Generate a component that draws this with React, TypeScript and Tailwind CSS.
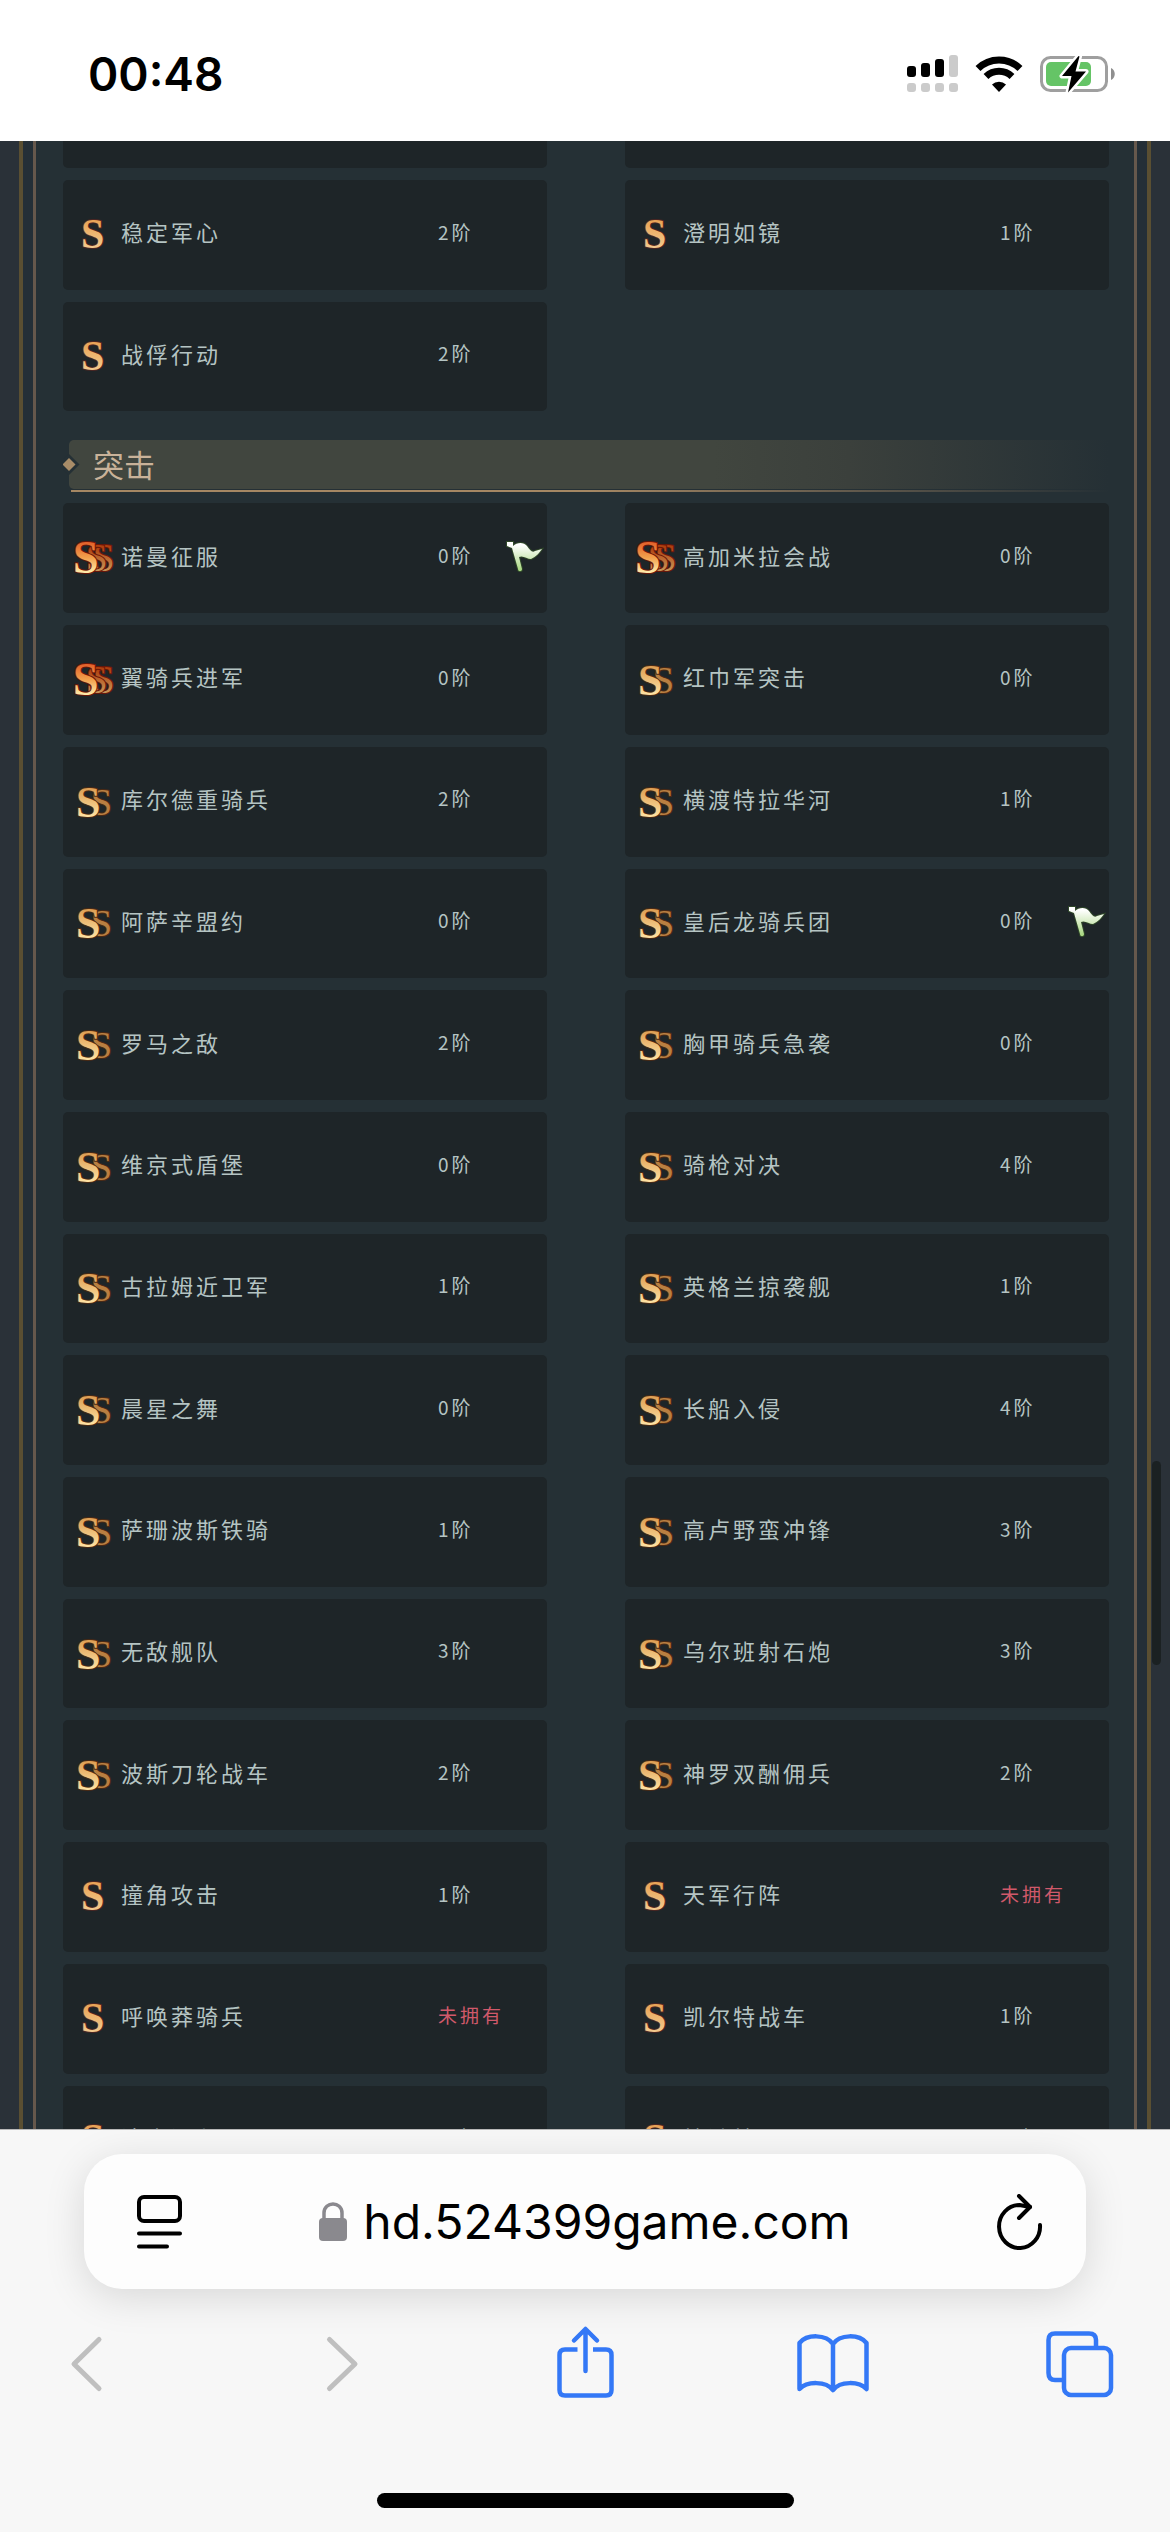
type Grade = "S" | "SS" | "SSS";

interface ITactic {
    name: string;
    grade: Grade;
    // null means the tactic is not owned
    tier: number | null;
    flagged?: boolean;
}

const previousTactics: ITactic[] = [
    { name: "稳定军心", grade: "S", tier: 2 },
    { name: "澄明如镜", grade: "S", tier: 1 },
    { name: "战俘行动", grade: "S", tier: 2 },
];

const assaultTactics: ITactic[] = [
    { name: "诺曼征服", grade: "SSS", tier: 0, flagged: true },
    { name: "高加米拉会战", grade: "SSS", tier: 0 },
    { name: "翼骑兵进军", grade: "SSS", tier: 0 },
    { name: "红巾军突击", grade: "SS", tier: 0 },
    { name: "库尔德重骑兵", grade: "SS", tier: 2 },
    { name: "横渡特拉华河", grade: "SS", tier: 1 },
    { name: "阿萨辛盟约", grade: "SS", tier: 0 },
    { name: "皇后龙骑兵团", grade: "SS", tier: 0, flagged: true },
    { name: "罗马之敌", grade: "SS", tier: 2 },
    { name: "胸甲骑兵急袭", grade: "SS", tier: 0 },
    { name: "维京式盾堡", grade: "SS", tier: 0 },
    { name: "骑枪对决", grade: "SS", tier: 4 },
    { name: "古拉姆近卫军", grade: "SS", tier: 1 },
    { name: "英格兰掠袭舰", grade: "SS", tier: 1 },
    { name: "晨星之舞", grade: "SS", tier: 0 },
    { name: "长船入侵", grade: "SS", tier: 4 },
    { name: "萨珊波斯铁骑", grade: "SS", tier: 1 },
    { name: "高卢野蛮冲锋", grade: "SS", tier: 3 },
    { name: "无敌舰队", grade: "SS", tier: 3 },
    { name: "乌尔班射石炮", grade: "SS", tier: 3 },
    { name: "波斯刀轮战车", grade: "SS", tier: 2 },
    { name: "神罗双酬佣兵", grade: "SS", tier: 2 },
    { name: "撞角攻击", grade: "S", tier: 1 },
    { name: "天军行阵", grade: "S", tier: null },
    { name: "呼唤莽骑兵", grade: "S", tier: null },
    { name: "凯尔特战车", grade: "S", tier: 1 },
    { name: "清支河北", grade: "S", tier: 1 },
    { name: "抢滩抢工", grade: "S", tier: 1 },
];

const App = () => {
    return (
        <div className="flex h-screen flex-col overflow-hidden bg-white font-['Noto_Sans_CJK_SC',sans-serif]">
            <GradeGradients />
            <StatusBar />
            <main className="relative min-h-0 flex-1 overflow-hidden bg-[#2a3138] px-[19px]">
                <div className="border-x-4 border-[#5a4f32] bg-[#242f37] px-[10px]">
                    <div className="border-x-[3px] border-[#66584c] bg-[#253035] pr-[25px] pl-[27px]">
                        <div className="grid grid-cols-2 gap-x-[78px]">
                            <div className="h-[27px] rounded-b-[5px] bg-[#1e2528]" />
                            <div className="h-[27px] rounded-b-[5px] bg-[#1e2528]" />
                        </div>
                        <div className="mt-3">
                            <TacticGrid tactics={previousTactics} />
                        </div>
                        <SectionTitle title="突击" />
                        <TacticGrid tactics={assaultTactics} />
                    </div>
                </div>
                <div className="absolute top-[1320px] right-[9px] h-[204px] w-[9px] rounded-full bg-[#1b2122]" />
            </main>
            <BrowserBar />
        </div>
    );
};

export default App;

const TacticGrid = ({ tactics }: { tactics: ITactic[] }) => {
    return (
        <ul className="grid grid-cols-2 gap-x-[78px] gap-y-3">
            {tactics.map((tactic) => (
                <TacticCard key={tactic.name} tactic={tactic} />
            ))}
        </ul>
    );
};

const TacticCard = ({ tactic }: { tactic: ITactic }) => {
    return (
        <li className="flex aspect-[75/17] items-center rounded-[5px] bg-[#1e2528] pr-[3px] pb-1.5 pl-[10px]">
            <GradeIcon grade={tactic.grade} />
            <span className="ml-2 flex-1 text-[22px] tracking-[3px] whitespace-nowrap text-[#b5c4c3]">
                {tactic.name}
            </span>
            <span className="flex w-[106px] items-center justify-between">
                {tactic.tier === null ? (
                    <span className="text-[19px] tracking-[3px] text-[#d0596a]">未拥有</span>
                ) : (
                    <span className="text-[19px] tracking-[3px] text-[#b5c4c3]">
                        {tactic.tier}阶
                    </span>
                )}
                {tactic.flagged && <FlagIcon />}
            </span>
        </li>
    );
};

const SectionTitle = ({ title }: { title: string }) => {
    return (
        <div className="mt-[29px] mb-[11px] flex flex-col pl-[6px]">
            <div className="relative flex h-[49px] items-center rounded-l-[5px] bg-linear-to-r from-[#41463f] from-62% via-[#3b403c] via-75% to-[#253035] pb-0.5 pl-6">
                <svg
                    className="absolute top-0 -left-[6px]"
                    width="18"
                    height="49"
                    viewBox="0 0 18 49"
                >
                    <path d="M6 14 L16.500 24.500 L6 35 L0 30 V19 Z" fill="#253035" />
                    <path d="M6 18 L12.500 24.500 L6 31 L-0.500 24.500 Z" fill="#a88c68" />
                </svg>
                <h2 className="text-[31px] leading-none text-[#c9b299]">{title}</h2>
            </div>
            <div className="mt-px ml-0.5 h-0.5 bg-linear-to-r from-[#a58763] from-50% to-[#253035]" />
        </div>
    );
};

const GradeGradients = () => {
    return (
        <svg className="absolute size-0" aria-hidden="true">
            <defs>
                <linearGradient id="single" x1="0" y1="0" x2="0" y2="1">
                    <stop offset="0.2" stopColor="#e8a356" />
                    <stop offset="0.8" stopColor="#f3c98d" />
                </linearGradient>
                <linearGradient id="double" x1="0" y1="0" x2="0" y2="1">
                    <stop offset="0.2" stopColor="#dd9d52" />
                    <stop offset="0.8" stopColor="#ffe3a4" />
                </linearGradient>
                <linearGradient id="triple" x1="0" y1="0" x2="0" y2="1">
                    <stop offset="0.2" stopColor="#e2602a" />
                    <stop offset="0.5" stopColor="#f2a04c" />
                    <stop offset="0.8" stopColor="#ffedac" />
                </linearGradient>
                <linearGradient id="tripleBack" x1="0" y1="0" x2="0" y2="1">
                    <stop offset="0.3" stopColor="#b0400f" />
                    <stop offset="0.8" stopColor="#c99c5e" />
                </linearGradient>
                <linearGradient id="flag" x1="0" y1="0" x2="0" y2="1">
                    <stop offset="0.1" stopColor="#ffffff" />
                    <stop offset="1" stopColor="#a5d67c" />
                </linearGradient>
            </defs>
        </svg>
    );
};

// The trailing letters come first so that the leading S is painted over them
const GradeIcon = ({ grade }: { grade: Grade }) => {
    return (
        <svg
            className="shrink-0 overflow-visible font-['Liberation_Serif',serif]"
            width="40"
            height="40"
            viewBox="0 0 40 40"
        >
            {grade === "S" && (
                <text
                    x="8"
                    y="36"
                    fontSize="42"
                    fontWeight="700"
                    fill="url(#single)"
                    stroke="#4a2622"
                    strokeWidth="2"
                    paintOrder="stroke"
                >
                    S
                </text>
            )}
            {grade === "SS" && (
                <text y="38" fontWeight="700" stroke="#4a2a14" strokeWidth="2" paintOrder="stroke">
                    <tspan x="18" y="36" fontSize="38" fontWeight="400" fill="#b97f41">
                        S
                    </tspan>
                    <tspan x="3" y="38" fontSize="44" fill="url(#double)">
                        S
                    </tspan>
                </text>
            )}
            {grade === "SSS" && (
                <text y="38" fontWeight="700" stroke="#6b1708" strokeWidth="2" paintOrder="stroke">
                    <tspan x="20" y="36" fontSize="39" fontWeight="400" fill="url(#tripleBack)">
                        S
                    </tspan>
                    <tspan x="13" y="36" fontSize="39" fontWeight="400" fill="url(#tripleBack)">
                        S
                    </tspan>
                    <tspan x="0" y="38" fontSize="46" fill="url(#triple)">
                        S
                    </tspan>
                </text>
            )}
        </svg>
    );
};

const FlagIcon = () => {
    return (
        <svg width="38" height="34" viewBox="0 0 38 34">
            <path
                d="M1 4 H7 V8 C11 4 18 4 21 8 C24 12 26 15 29 13 L36 11 C34 14 30 19 25 21 C21 21 17 17 13 19 L16 31 C16 34 12 34 12 31 L6 10 L1 8 Z"
                fill="url(#flag)"
                stroke="#3f6a2a"
                strokeOpacity="0.5"
                strokeWidth="2"
                paintOrder="stroke"
            />
        </svg>
    );
};

const StatusBar = () => {
    return (
        <header className="flex h-[141px] shrink-0 items-center justify-between bg-white pt-[7px] pr-[55px] pl-[88px] font-['Inter',sans-serif]">
            <time className="text-[46px] font-semibold text-black">00:48</time>
            <div className="flex items-center gap-[17px]">
                <svg width="51" height="38" viewBox="0 0 51 38">
                    <g fill="#000">
                        <rect x="0" y="11" width="9" height="11" rx="3" />
                        <rect x="14" y="8" width="9" height="14" rx="3" />
                        <rect x="28" y="4" width="9" height="18" rx="3" />
                    </g>
                    <g fill="#cbcbcb">
                        <rect x="42" y="0" width="9" height="22" rx="3" />
                        <rect x="0" y="28" width="9" height="9" rx="3" />
                        <rect x="14" y="28" width="9" height="9" rx="3" />
                        <rect x="28" y="28" width="9" height="9" rx="3" />
                        <rect x="42" y="28" width="9" height="9" rx="3" />
                    </g>
                </svg>
                <svg width="48" height="38" viewBox="0 0 48 38">
                    <path d="M3 13.500 A30 30 0 0 1 45 13.500" stroke="#000" strokeWidth="7" fill="none" />
                    <path d="M11 21.500 A19 19 0 0 1 37 21.500" stroke="#000" strokeWidth="7" fill="none" />
                    <path d="M24 37 L17 29.500 A10 10 0 0 1 31 29.500 Z" fill="#000" />
                </svg>
                <svg width="75" height="40" viewBox="0 0 75 40">
                    <rect x="1.500" y="3.500" width="65" height="33" rx="9" stroke="#9f9f9f" strokeWidth="3" fill="none" />
                    <rect x="6" y="8" width="45" height="24" rx="5" fill="#65c466" />
                    <path d="M71 14 C76 16 76 24 71 26 Z" fill="#8f8f8f" />
                    <path
                        d="M38.500 2 L22 22 H31.500 L28 38.500 L46 17.500 H35.500 L39.500 2.500 Z"
                        fill="#000"
                        stroke="#fff"
                        strokeWidth="5"
                        strokeLinejoin="round"
                        paintOrder="stroke"
                    />
                </svg>
            </div>
        </header>
    );
};

const BrowserBar = () => {
    return (
        <footer className="shrink-0 border-t border-[#b9b9b9] bg-[#f7f7f7] pt-6 pb-6 font-['Inter',sans-serif]">
            <div className="mx-[84px] flex h-[135px] items-center justify-between rounded-[38px] bg-[#fdfdfd] px-[43px] shadow-[0_8px_40px_rgba(0,0,0,0.13)]">
                <button type="button" aria-label="Page menu">
                    <svg width="56" height="54" viewBox="0 0 56 54" fill="none" stroke="#000" strokeWidth="4" strokeLinecap="round">
                        <rect x="12" y="2" width="41" height="24" rx="5" />
                        <path d="M12 38.500 H53 M12 51.500 H40" />
                    </svg>
                </button>
                <label className="flex items-center gap-4">
                    <svg width="28" height="40" viewBox="0 0 28 40">
                        <rect x="0" y="16" width="28" height="23" rx="4" fill="#8a898e" />
                        <path d="M5 18 V11 C5 -1 23 -1 23 11 V18" stroke="#8a898e" strokeWidth="3.500" fill="none" />
                    </svg>
                    <input
                        type="text"
                        aria-label="Address"
                        defaultValue="hd.524399game.com"
                        className="field-sizing-content text-5xl text-black outline-none"
                    />
                </label>
                <button type="button" aria-label="Reload">
                    <svg width="56" height="56" viewBox="0 0 56 56" fill="none" stroke="#000" strokeWidth="4" strokeLinecap="round" strokeLinejoin="round">
                        <path d="M53 31 A20.500 21.500 0 1 1 32.500 11 L43 13" />
                        <path d="M32 2 L43 13 L32 24" />
                    </svg>
                </button>
            </div>
            <nav className="mt-[35px] flex justify-between pr-[50px] pl-[46px]">
                <button type="button" aria-label="Back" disabled>
                    <svg width="80" height="80" viewBox="0 0 80 80" fill="none" stroke="#bfbfbf" strokeWidth="5" strokeLinecap="round" strokeLinejoin="round">
                        <path d="M53 15.500 L28 40 L53 64.500" />
                    </svg>
                </button>
                <button type="button" aria-label="Forward" disabled>
                    <svg width="80" height="80" viewBox="0 0 80 80" fill="none" stroke="#bfbfbf" strokeWidth="5" strokeLinecap="round" strokeLinejoin="round">
                        <path d="M34.500 15.500 L60 40 L34.500 64.500" />
                    </svg>
                </button>
                <button type="button" aria-label="Share">
                    <svg width="80" height="80" viewBox="0 0 80 80" fill="none" stroke="#3478f6" strokeWidth="4.500" strokeLinejoin="round">
                        <path d="M34.500 25.500 H22 Q16.500 25.500 16.500 31 V66 Q16.500 71.500 22 71.500 H63 Q68.500 71.500 68.500 66 V31 Q68.500 25.500 63 25.500 H50" />
                        <path d="M42.500 47 V6 M31 16.500 L42.500 5 L54 16.500" strokeLinecap="round" />
                    </svg>
                </button>
                <button type="button" aria-label="Bookmarks">
                    <svg width="80" height="80" viewBox="0 0 80 80" fill="none" stroke="#3478f6" strokeWidth="4.500" strokeLinecap="round" strokeLinejoin="round">
                        <path d="M41 20 C34 10 15 10 7.500 19 V65 C15 57 34 57 41 66 C48 57 67 57 74.500 65 V19 C67 10 48 10 41 20 V66" />
                    </svg>
                </button>
                <button type="button" aria-label="Tabs">
                    <svg width="80" height="80" viewBox="0 0 80 80" fill="none" stroke="#3478f6" strokeWidth="4.500">
                        <rect x="24" y="24" width="47" height="47" rx="7" />
                        <path d="M24 56 H15 Q8.500 56 8.500 49 V16 Q8.500 9.500 15 9.500 H49 Q56 9.500 56 16 V24" />
                    </svg>
                </button>
            </nav>
            <div className="mx-auto mt-[89px] h-[15px] w-[417px] rounded-full bg-black" />
        </footer>
    );
};
